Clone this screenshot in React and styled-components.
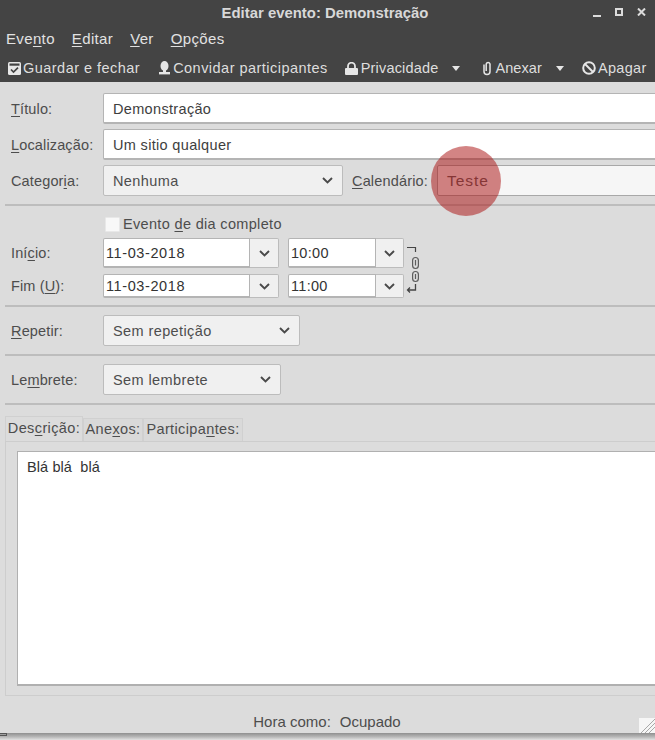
import React from "react";
import styled, { createGlobalStyle } from "styled-components";

const Global = createGlobalStyle`
  html, body { margin: 0; padding: 0; background: #fff; }
  body { width: 655px; height: 740px; overflow: hidden; font-family: "Liberation Sans", Arial, sans-serif; }
`;
const Shell = styled.div`
  position: relative; width: 655px; height: 740px; overflow: hidden;
  background: linear-gradient(#8a8a8a, #8f8f8f 733px, #8f8f8f 733px, #b9b9b9 737px, #e2e2e2 740px);
`;
const Win = styled.div`
  position: relative; width: 655px; height: 733px; display: flex; flex-direction: column;
  overflow: hidden; background: #dcdcdc; color: #4d4d4d; font-size: 14.5px;
`;
const Stub = styled.div`
  position: absolute; left: 0; top: 733px; width: 7px; height: 3px; box-sizing: border-box; border: 1px solid #555; border-left: none;
`;
const TitleBar = styled.div`
  position: relative; height: 26px; flex: none; background: #444; color: #d8d8d8;
  font-weight: bold; font-size: 14.9px; display: flex; align-items: center; justify-content: center;
  padding-right: 5px; box-sizing: border-box;
`;
const WinButtons = styled.div`
  position: absolute; right: 9px; top: 7px; display: flex; gap: 14px; align-items: center;
`;
const MenuBar = styled.div`
  height: 26px; flex: none; background: #444; color: #e2e2e2; display: flex; align-items: center;
  padding-left: 6px; gap: 17px; font-size: 15px; letter-spacing: .35px; padding-bottom: 2px; box-sizing: border-box;
`;
const Toolbar = styled.div`
  height: 30px; flex: none; background: #444; color: #dedede; display: flex; align-items: center;
  font-size: 14.5px; position: relative; box-sizing: border-box; padding: 2px 0 0 8px;
`;
const Tool = styled.div`
  display: flex; align-items: center; gap: ${(p) => p.$gap ?? 2}px; margin-left: ${(p) => p.$ml ?? 0}px;
  white-space: nowrap; letter-spacing: ${(p) => p.$ls ?? 0.47}px;
`;
const Body = styled.div`
  flex: 1; display: flex; flex-direction: column; padding: 11px 0 0 5px; min-height: 0; position: relative;
`;
const Row = styled.div`
  display: flex; align-items: center; height: ${(p) => p.$h ?? 31}px; margin-bottom: ${(p) => p.$mb ?? 5}px; flex: none;
`;
const Label = styled.div`
  width: 98px; flex: none; padding-left: 6px; box-sizing: border-box; letter-spacing: .14px; white-space: nowrap;
`;
const Input = styled.div`
  flex: none; width: 600px; height: 100%; box-sizing: border-box; background: #fff; border: 1px solid #b4b4b4;
  border-bottom-width: 2px; border-radius: 2px; padding: 1px 0 0 9px; display: flex; align-items: center; color: #3e3e3e; letter-spacing: .33px;
`;
const Select = styled.div`
  flex: none; width: ${(p) => p.$w}px; height: 100%; box-sizing: border-box; background: ${(p) => (p.$light ? "#f6f6f6" : "#f0f0f0")};
  border: 1px solid ${(p) => (p.$light ? "#a8a8a8" : "#bcbcbc")};
  border-radius: 2px; padding: 0 9px 0 9px; display: flex; align-items: center; justify-content: space-between; letter-spacing: .4px;
`;
const Wide = styled.span`
  font-size: 15.5px; letter-spacing: .95px; color: #5c5c5c;
`;
const CalLabel = styled.div`
  flex: none; margin-left: 9px; width: 85px; letter-spacing: .16px;
`;
const Sep = styled.div`
  flex: none; height: 2px; background: #bdbdbd; margin-bottom: ${(p) => p.$mb ?? 9}px; margin-top: ${(p) => p.$mt ?? 0}px;
`;
const CheckRow = styled.div`
  display: flex; align-items: center; height: 18px; padding-left: 100px; margin-bottom: 5px; gap: 3px; letter-spacing: .33px; flex: none;
`;
const Check = styled.div`
  width: 15px; height: 15px; background: #f8f8f8; border: 1px solid #e8e8e8; box-sizing: border-box; border-radius: 1px;
`;
const DateGroup = styled.div`
  display: flex; height: 100%; flex: none; margin-right: ${(p) => p.$mr ?? 0}px;
`;
const DateField = styled.div`
  width: ${(p) => p.$w}px; box-sizing: border-box; background: #fff; border: 1px solid #b4b4b4; border-bottom-width: 2px;
  border-radius: 2px 0 0 2px; padding-left: 2px; display: flex; align-items: center; color: #333; letter-spacing: ${(p) => p.$ls ?? 0.3}px;
`;
const DateBtn = styled.div`
  width: ${(p) => p.$w}px; box-sizing: border-box; background: #f0f0f0; border: 1px solid #bcbcbc; border-left: none;
  border-radius: 0 2px 2px 0; display: flex; align-items: center; justify-content: center;
`;
const LinkIcon = styled.svg`
  position: absolute; left: 404px; top: 158px;
`;
const Tabs = styled.div`
  display: flex; align-items: flex-end; height: 25px; flex: none; margin-top: 2px;
`;
const Tab = styled.div`
  height: ${(p) => (p.$active ? 25 : 23)}px; box-sizing: border-box; width: ${(p) => p.$w}px; border: 1px solid #d0d0d0; border-bottom: none;
  background: ${(p) => (p.$active ? "#dcdcdc" : "#d9d9d9")}; display: flex; align-items: center; justify-content: center;
  font-size: 14.5px; letter-spacing: .38px; white-space: nowrap; padding-bottom: 2px;
`;
const Panel = styled.div`
  flex: none; height: 255px; margin-right: -20px; box-sizing: border-box; border: 1px solid #cdcdcd; padding: 9px 11px;
`;
const TextArea = styled.div`
  height: 100%; box-sizing: border-box; background: #fff; border: 1px solid #b0b0b0; border-bottom-width: 2px; padding: 7px 9px; color: #333;
  font-size: 14.5px; white-space: pre; letter-spacing: .1px;
`;
const Status = styled.div`
  flex: none; display: flex; justify-content: center; gap: 9px; margin-top: 15px; padding-right: 6px; font-size: 15px; height: 20px; align-items: center;
`;
const Grip = styled.svg`
  position: absolute; right: 0; bottom: 0;
`;
const Spot = styled.div`
  position: absolute; left: 431px; top: 146px; width: 70px; height: 70px; border-radius: 50%;
  background: rgba(170, 20, 20, 0.52); pointer-events: none;
`;
const Chevron = styled.svg`
  display: block; flex: none;
`;
const M = styled.span`
  text-decoration: underline; text-underline-offset: 2px; text-decoration-thickness: 1px;
`;

const Chev = () => (
  <Chevron width="11" height="7" viewBox="0 0 11 7">
    <path d="M1 1 L5.5 5.5 L10 1" fill="none" stroke="#4a4a4a" strokeWidth="1.9" />
  </Chevron>
);
const Caret = ({ ml }) => (
  <Tool $ml={ml}>
    <svg width="8" height="5" viewBox="0 0 8 5"><path d="M0 0H8L4 5Z" fill="#e6e6e6" /></svg>
  </Tool>
);

export default function App() {
  return (
    <Shell>
      <Global />
      <Win>
        <TitleBar>
          Editar evento: Demonstração
          <WinButtons>
            <svg width="8" height="10" viewBox="0 0 8 10"><rect y="8" width="8" height="2" fill="#dcdcdc" /></svg>
            <svg width="8" height="8" viewBox="0 0 8 8"><rect x="1" y="1" width="6" height="6" fill="none" stroke="#dcdcdc" strokeWidth="2" /></svg>
            <svg width="9" height="8" viewBox="0 0 9 8"><path d="M1 0.5 L8 7.5 M8 0.5 L1 7.5" stroke="#dcdcdc" strokeWidth="2" /></svg>
          </WinButtons>
        </TitleBar>
        <MenuBar>
          <span>Eve<M>n</M>to</span>
          <span><M>E</M>ditar</span>
          <span><M>V</M>er</span>
          <span><M>O</M>pções</span>
        </MenuBar>
        <Toolbar>
          <Tool>
            <svg width="13" height="13" viewBox="0 0 13 13">
              <rect x="0" y="0" width="13" height="13" rx="1.5" fill="#e8e8e8" />
              <rect x="1.5" y="1.5" width="10" height="2.2" fill="#444" />
              <path d="M3 7.5 L5.5 10 L10 5.6" stroke="#444" strokeWidth="1.7" fill="none" />
            </svg>
            Guardar e fechar
          </Tool>
          <Tool $ml={18}>
            <svg width="13" height="14" viewBox="0 0 13 14">
              <ellipse cx="6.5" cy="5" rx="4" ry="5" fill="#e6e6e6" />
              <rect x="5" y="9" width="3" height="2" fill="#e6e6e6" />
              <rect x="1" y="11" width="11" height="2.4" fill="#e6e6e6" />
            </svg>
            Convidar participantes
          </Tool>
          <Tool $ml={17} $ls={0.17} $gap={3}>
            <svg width="13" height="13" viewBox="0 0 13 13">
              <path d="M3 6V4.2a3.5 3.5 0 0 1 7 0V6" fill="none" stroke="#e6e6e6" strokeWidth="1.8" />
              <rect x="0" y="6" width="13" height="7" rx="1" fill="#e6e6e6" />
            </svg>
            Privacidade
          </Tool>
          <Caret ml={14} />
          <Tool $ml={22} $gap={3} $ls={0.1}>
            <svg width="10" height="15" viewBox="0 0 10 15">
              <path d="M2 3.5V10.5a3 3 0 0 0 6 0V3a2 2 0 0 0-3.8 0V10" fill="none" stroke="#e6e6e6" strokeWidth="1.5" />
            </svg>
            Anexar
          </Tool>
          <Caret ml={14} />
          <Tool $ml={18} $gap={2} $ls={0.3}>
            <svg width="14" height="14" viewBox="0 0 14 14">
              <circle cx="7" cy="7" r="5.8" fill="none" stroke="#e6e6e6" strokeWidth="2" />
              <path d="M3 3 L11 11" stroke="#e6e6e6" strokeWidth="2" />
            </svg>
            Apagar
          </Tool>
        </Toolbar>
        <Body>
          <Row>
            <Label><M>T</M>ítulo:</Label>
            <Input>Demonstração</Input>
          </Row>
          <Row>
            <Label><M>L</M>ocalização:</Label>
            <Input>Um sitio qualquer</Input>
          </Row>
          <Row $mb={8}>
            <Label>Categor<M>i</M>a:</Label>
            <Select $w={240}><span>Nenhuma</span><Chev /></Select>
            <CalLabel><M>C</M>alendário:</CalLabel>
            <Select $w={300} $light><Wide>Teste</Wide></Select>
          </Row>
          <Sep $mb={9} />
          <CheckRow><Check /><span>Evento <M>d</M>e dia completo</span></CheckRow>
          <Row $h={30} $mb={6}>
            <Label>Iní<M>c</M>io:</Label>
            <DateGroup $mr={9}>
              <DateField $w={147} $ls={0.6}>11-03-2018</DateField>
              <DateBtn $w={29}><Chev /></DateBtn>
            </DateGroup>
            <DateGroup>
              <DateField $w={88}>10:00</DateField>
              <DateBtn $w={28}><Chev /></DateBtn>
            </DateGroup>
          </Row>
          <Row $h={24} $mb={7}>
            <Label>Fim (<M>U</M>):</Label>
            <DateGroup $mr={9}>
              <DateField $w={147} $ls={0.6}>11-03-2018</DateField>
              <DateBtn $w={29}><Chev /></DateBtn>
            </DateGroup>
            <DateGroup>
              <DateField $w={88}>11:00</DateField>
              <DateBtn $w={28}><Chev /></DateBtn>
            </DateGroup>
          </Row>
          <LinkIcon width="16" height="60" viewBox="0 0 16 60">
            <path d="M3 7.5H11.5V12" fill="none" stroke="#444" strokeWidth="1.2" />
            <rect x="8.6" y="17.5" width="5.8" height="11" rx="2.9" fill="none" stroke="#5c5c5c" strokeWidth="1.2" />
            <path d="M11.5 20V25.5" stroke="#5c5c5c" strokeWidth="1.2" />
            <rect x="8.6" y="31.5" width="5.8" height="10" rx="2.9" fill="none" stroke="#5c5c5c" strokeWidth="1.2" />
            <path d="M11.5 34V39" stroke="#5c5c5c" strokeWidth="1.2" />
            <path d="M11.5 44V50H3.5M6 47.5L3.5 50L6 52.5" fill="none" stroke="#444" strokeWidth="1.3" />
          </LinkIcon>
          <Sep $mb={8} />
          <Row>
            <Label><M>R</M>epetir:</Label>
            <Select $w={197}><span>Sem repetição</span><Chev /></Select>
          </Row>
          <Sep $mt={3} $mb={8} />
          <Row>
            <Label>Le<M>m</M>brete:</Label>
            <Select $w={178}><span>Sem lembrete</span><Chev /></Select>
          </Row>
          <Sep $mt={3} $mb={9} />
          <Tabs>
            <Tab $active $w={78}><span>Des<M>c</M>rição:</span></Tab>
            <Tab $w={60}><span>Ane<M>x</M>os:</span></Tab>
            <Tab $w={100}><span>Participa<M>n</M>tes:</span></Tab>
          </Tabs>
          <Panel>
            <TextArea>Blá blá  blá</TextArea>
          </Panel>
          <Status><span>Hora como:</span><span>Ocupado</span></Status>
        </Body>
        <Grip width="16" height="15" viewBox="0 0 16 15">
          <rect width="16" height="15" fill="#f6f6f6" />
          <path d="M2 15L16 1M6 15L16 5M10 15L16 9" stroke="#a8a8a8" strokeWidth="1" />
        </Grip>
        <Spot />
      </Win>
      <Stub />
    </Shell>
  );
}
